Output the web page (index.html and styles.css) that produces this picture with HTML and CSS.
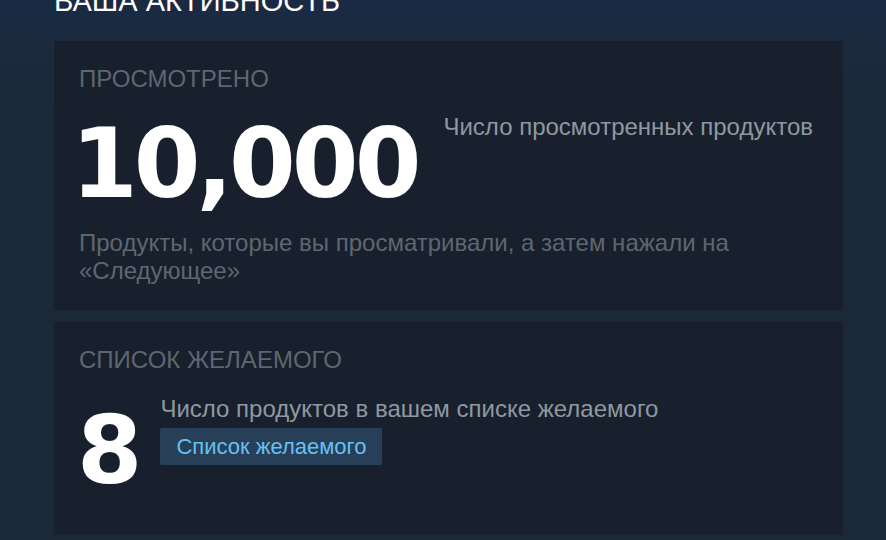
FILE: index.html
```html
<!DOCTYPE html>
<html>
<head>
  <title>Ваша активность</title>
  <link rel="stylesheet" href="styles.css">
</head>
<body>
  <div class="activity">
    <h2 class="activity-title">Ваша активность</h2>

    <div class="stat-card">
      <div class="stat-label">Просмотрено</div>
      <div class="stat-row">
        <div class="stat-number big">10,000</div>
        <div class="stat-caption">Число просмотренных продуктов</div>
      </div>
      <div class="stat-desc">Продукты, которые вы просматривали, а затем нажали на «Следующее»</div>
    </div>

    <div class="stat-card wish">
      <div class="stat-label">Список желаемого</div>
      <div class="stat-row">
        <div class="stat-number small">8</div>
        <div class="stat-side">
          <div class="stat-caption">Число продуктов в вашем списке желаемого</div>
          <a class="stat-button" href="#">Список желаемого</a>
        </div>
      </div>
    </div>
  </div>
</body>
</html>
```

FILE: styles.css
```css
body {
  margin: 0;
  font-family: Arial, "Liberation Sans", sans-serif;
  background: linear-gradient(to bottom, #1a2a44 0px, #1b2a3f 40px, #1b2838 120px);
  background-color: #1b2838;
  min-height: 540px;
  overflow: hidden;
}
.activity {
  width: 789px;
  margin-left: 54px;
}
.activity-title {
  margin: -13px 0 25px 0;
  font-size: 29px;
  line-height: 29px;
  font-weight: normal;
  text-transform: uppercase;
  color: #ffffff;
}
.stat-card {
  background-color: #18202d;
  padding: 24px 25px 25px 25px;
  margin-bottom: 12px;
}
.stat-label {
  font-size: 24px;
  line-height: 28px;
  text-transform: uppercase;
  color: #5e6770;
}
.stat-row {
  display: flex;
  align-items: flex-start;
}
.stat-number {
  font-family: "DejaVu Sans", sans-serif;
  font-weight: bold;
  color: #ffffff;
  line-height: 1;
}
.stat-number.big {
  font-size: 96px;
  letter-spacing: -4px;
  margin: 23px 0 0 -8px;
}
.stat-number.small {
  font-size: 94px;
  margin: 30px 0 0 -2px;
}
.stat-caption {
  font-size: 24px;
  line-height: 28px;
  color: #8f98a0;
}
.big + .stat-caption {
  margin: 20px 0 0 26px;
}
.stat-side {
  margin: 21px 0 0 18px;
}
.stat-button {
  display: inline-block;
  margin-top: 5px;
  padding: 0 16px;
  height: 37px;
  line-height: 37px;
  font-size: 22px;
  color: #66c0f4;
  background-color: #274057;
  border-radius: 2px;
  text-decoration: none;
}
.stat-desc {
  margin-top: 17px;
  font-size: 24px;
  line-height: 28px;
  color: #5e6770;
}
.wish {
  padding-bottom: 37px;
}
```
